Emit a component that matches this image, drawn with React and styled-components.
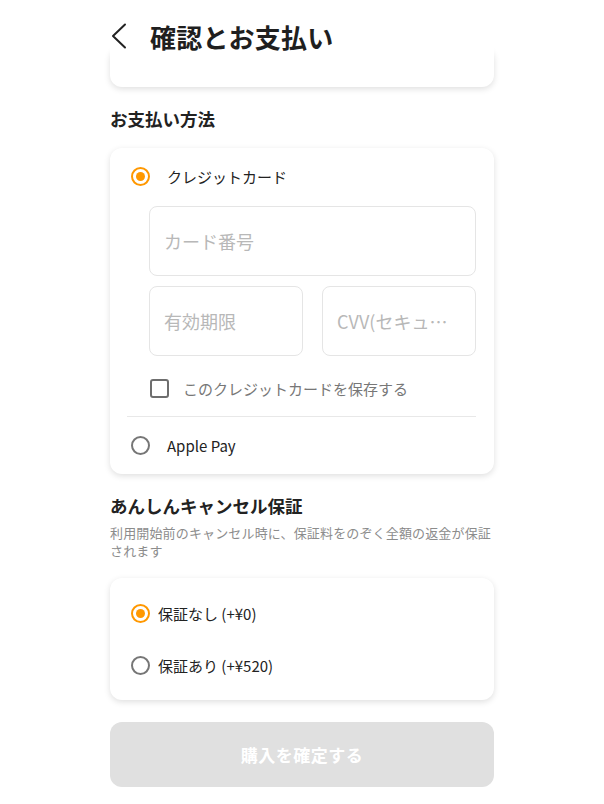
import styled, { createGlobalStyle } from 'styled-components';

const GlobalStyle = createGlobalStyle`
  body {
    margin: 0;
    background: #ffffff;
    font-family: "Noto Sans CJK JP", "Noto Sans", sans-serif;
    color: #222222;
  }
  * {
    box-sizing: border-box;
  }
`;

const Page = styled.div`
  width: 384px;
  margin: 0 auto;
  padding-bottom: 17px;
`;

const Header = styled.header`
  position: relative;
  z-index: 2;
  display: flex;
  align-items: center;
  gap: 22px;
  height: 72px;
  background: #ffffff;

  svg {
    flex: none;
  }
`;

const Title = styled.h1`
  margin: 0;
  font-size: 26px;
  font-weight: 700;
  letter-spacing: 0.2px;
  color: #1f1f1f;
`;

const Card = styled.div`
  background: #ffffff;
  border-radius: 12px;
  box-shadow: 0 2px 6px rgba(0, 0, 0, 0.13);
`;

const HiddenCard = styled(Card)`
  position: relative;
  z-index: 1;
  height: 40px;
  margin-top: -25px;
`;

const SectionTitle = styled.h2`
  margin: ${(p) => p.$top}px 0 0;
  font-size: 17.5px;
  font-weight: 700;
  line-height: 24px;
  color: #222222;
`;

const PaymentCard = styled(Card)`
  margin-top: 17px;
  padding: 0 18px 0 17px;
`;

const OptionRow = styled.label`
  display: flex;
  align-items: center;
  gap: ${(p) => p.$gap}px;
  height: ${(p) => p.$height}px;
  padding-left: 4px;
  font-size: 15px;
  color: #222222;
`;

const Radio = styled.span`
  flex: none;
  width: 19px;
  height: 19px;
  border-radius: 50%;
  border: 2px solid ${(p) => (p.$checked ? '#ff9800' : '#767676')};
  display: flex;
  align-items: center;
  justify-content: center;

  &::after {
    content: '';
    width: 9px;
    height: 9px;
    border-radius: 50%;
    background: ${(p) => (p.$checked ? '#ff9800' : 'transparent')};
  }
`;

const Fields = styled.div`
  display: flex;
  flex-direction: column;
  gap: 10px;
  margin-top: 2px;
  padding-left: 22px;
`;

const FieldRow = styled.div`
  display: grid;
  grid-template-columns: 1fr 1fr;
  gap: 19px;
`;

const Input = styled.input`
  width: 100%;
  min-width: 0;
  height: 70px;
  padding: 0 14px;
  border: 1px solid #e5e5e5;
  border-radius: 8px;
  font-family: inherit;
  font-size: 18px;
  color: #222222;
  background: #ffffff;
  outline: none;
  text-overflow: ellipsis;

  &::placeholder {
    color: #b8b8b8;
  }
`;

const SaveRow = styled.label`
  display: flex;
  align-items: center;
  gap: 14px;
  height: 24px;
  margin-top: 20px;
  padding-left: 23px;
  font-size: 15px;
  color: #777777;
`;

const Checkbox = styled.span`
  flex: none;
  width: 19px;
  height: 19px;
  border: 2px solid #6e6e6e;
  border-radius: 3px;
`;

const Divider = styled.hr`
  margin: 16px 0 0;
  border: none;
  border-top: 1px solid #e8e8e8;
`;

const Description = styled.p`
  margin: 6px 0 0;
  font-size: 13px;
  line-height: 18px;
  letter-spacing: 0.15px;
  color: #8c8c8c;
`;

const GuaranteeCard = styled(Card)`
  margin-top: 18px;
  padding: 9px 18px 9px 17px;
`;

const SubmitButton = styled.button`
  display: block;
  width: 100%;
  height: 65px;
  margin-top: 22px;
  border: none;
  border-radius: 12px;
  background: #e0e0e0;
  color: #ffffff;
  font-family: inherit;
  font-size: 17px;
  font-weight: 700;
  letter-spacing: 0.5px;
`;

const BackIcon = () => (
  <svg width="18" height="26" viewBox="0 0 18 26">
    <path d="M15 1.5 L3 13 L15 24.5" fill="none" stroke="#222" strokeWidth="2" strokeLinecap="round" strokeLinejoin="round" />
  </svg>
);

const App = () => (
  <>
    <GlobalStyle />
    <Page>
      <Header>
        <BackIcon />
        <Title>確認とお支払い</Title>
      </Header>
      <HiddenCard />

      <SectionTitle $top={20}>お支払い方法</SectionTitle>
      <PaymentCard>
        <OptionRow $height={56} $gap={17}>
          <Radio $checked />
          クレジットカード
        </OptionRow>
        <Fields>
          <Input placeholder="カード番号" />
          <FieldRow>
            <Input placeholder="有効期限" />
            <Input placeholder="CVV(セキュリティコード)" />
          </FieldRow>
        </Fields>
        <SaveRow>
          <Checkbox />
          このクレジットカードを保存する
        </SaveRow>
        <Divider />
        <OptionRow $height={57} $gap={17}>
          <Radio />
          Apple Pay
        </OptionRow>
      </PaymentCard>

      <SectionTitle $top={20}>あんしんキャンセル保証</SectionTitle>
      <Description>
        利用開始前のキャンセル時に、保証料をのぞく全額の返金が保証されます
      </Description>
      <GuaranteeCard>
        <OptionRow $height={52} $gap={8}>
          <Radio $checked />
          保証なし (+¥0)
        </OptionRow>
        <OptionRow $height={52} $gap={8}>
          <Radio />
          保証あり (+¥520)
        </OptionRow>
      </GuaranteeCard>

      <SubmitButton disabled>購入を確定する</SubmitButton>
    </Page>
  </>
);

export default App;
